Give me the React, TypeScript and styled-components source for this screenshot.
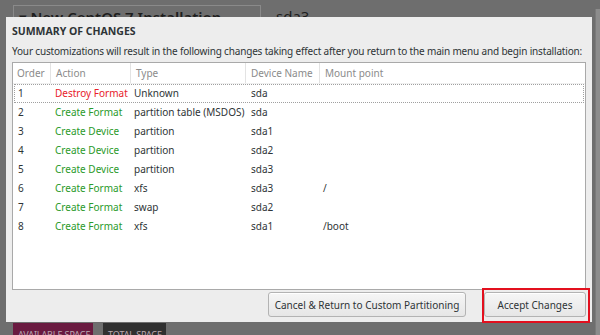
import React from "react";
import styled, { createGlobalStyle } from "styled-components";

const Global = createGlobalStyle`
  html, body { margin: 0; padding: 0; background: #6e6e6e; }
  body { width: 600px; height: 335px; overflow: hidden; font-family: "Noto Sans", "DejaVu Sans", sans-serif; }
`;

const Page = styled.div`
  position: relative;
  width: 600px;
  height: 335px;
  background: #6e6e6e;
  display: grid;
  grid-template-columns: 1fr 5px;
  overflow: hidden;
`;

const Main = styled.div`
  display: flex;
  flex-direction: column;
  justify-content: space-between;
  padding: 5px 0 0 13px;
`;

const TopRow = styled.div`
  display: flex;
  align-items: flex-start;
  gap: 15px;
`;

const InstallBox = styled.div`
  width: 248px;
  height: 40px;
  border: 1px solid #8a8a8a;
  border-bottom: none;
  box-sizing: border-box;
  padding: 1px 0 0 5px;
  font-size: 15px;
  font-weight: 600;
  color: #1e1e1e;
`;

const DeviceLabel = styled.div`
  font-size: 15px;
  color: #1e1e1e;
  padding-top: 1px;
`;

const BottomRow = styled.div`
  display: flex;
  gap: 10px;
`;

const SpaceTile = styled.div<{ $bg: string; $w: number }>`
  background: ${(p) => p.$bg};
  width: ${(p) => p.$w}px;
  box-sizing: border-box;
  color: #b9a9b0;
  font-size: 9px;
  letter-spacing: -0.1px;
  height: 12px;
  padding: 6px 0 0 5px;
  line-height: 12px;
  overflow: hidden;
  white-space: nowrap;
`;

const Scrollbar = styled.div`
  margin-top: 9px;
  background: #8c8c8c;
  border-left: 1px solid #7a7a7a;
`;

const Dialog = styled.div`
  position: absolute;
  left: 6px;
  top: 17px;
  width: 586px;
  height: 305px;
  box-sizing: border-box;
  background: #ededed;
  padding: 0 6px 5px 6px;
  display: flex;
  flex-direction: column;
  color: #2e3436;
`;

const Title = styled.div`
  font-size: 10.5px;
  font-weight: 700;
  color: #2e3436;
  height: 24px;
  line-height: 29px;
`;

const Subtitle = styled.div`
  font-size: 10px;
  letter-spacing: -0.17px;
  color: #2e3436;
  height: 21px;
  line-height: 20px;
  white-space: nowrap;
`;

const Table = styled.div`
  flex: 1;
  background: #ffffff;
  border: 1px solid #a9a9a9;
  display: flex;
  flex-direction: column;
`;

const cols = "37px 80px 115px 74px 1fr";

const HeaderRow = styled.div`
  display: grid;
  grid-template-columns: ${cols};
  height: 20px;
  border-bottom: 1px solid #f0f0f0;
`;

const HeaderCell = styled.div<{ $sep?: boolean }>`
  font-size: 10px;
  color: #8b8b8b;
  line-height: 20px;
  padding-left: ${(p) => (p.$sep ? 5 : 4)}px;
  border-left: ${(p) => (p.$sep ? "1px solid #e3e3e3" : "none")};
`;

const Row = styled.div<{ $focused?: boolean }>`
  display: grid;
  grid-template-columns: ${cols};
  height: 19px;
  margin: 0 1px;
  box-sizing: border-box;
  border: 1px dotted ${(p) => (p.$focused ? "#a0a0a0" : "transparent")};
`;

const Cell = styled.div<{ $color?: string; $pad?: number }>`
  font-size: 10px;
  line-height: 17px;
  color: ${(p) => p.$color || "#2e3436"};
  padding-left: ${(p) => p.$pad ?? 3}px;
  white-space: nowrap;
`;

const ButtonBar = styled.div`
  display: flex;
  justify-content: flex-end;
  gap: 18px;
  padding-top: 2px;
`;

const Button = styled.button<{ $w: number }>`
  width: ${(p) => p.$w}px;
  height: 25px;
  box-sizing: border-box;
  border: 1px solid #b3b3b3;
  border-radius: 3px;
  background: linear-gradient(#f6f6f6, #e6e6e6);
  font-family: "Noto Sans", "DejaVu Sans", sans-serif;
  font-size: 10px;
  color: #2e3436;
  padding: 0;
  box-shadow: inset 0 1px #fff;
`;

const Highlight = styled.div`
  position: relative;
  display: flex;
`;

const RedBox = styled.div`
  position: absolute;
  left: -2px;
  right: -4px;
  top: -4px;
  bottom: -6px;
  border: 2px solid #e3101e;
  pointer-events: none;
`;

type Change = { order: number; action: string; type: string; device: string; mount: string };

const changes: Change[] = [
  { order: 1, action: "Destroy Format", type: "Unknown", device: "sda", mount: "" },
  { order: 2, action: "Create Format", type: "partition table (MSDOS)", device: "sda", mount: "" },
  { order: 3, action: "Create Device", type: "partition", device: "sda1", mount: "" },
  { order: 4, action: "Create Device", type: "partition", device: "sda2", mount: "" },
  { order: 5, action: "Create Device", type: "partition", device: "sda3", mount: "" },
  { order: 6, action: "Create Format", type: "xfs", device: "sda3", mount: "/" },
  { order: 7, action: "Create Format", type: "swap", device: "sda2", mount: "" },
  { order: 8, action: "Create Format", type: "xfs", device: "sda1", mount: "/boot" },
];

export default function App() {
  return (
    <>
      <Global />
      <Page>
        <Main>
          <TopRow>
            <InstallBox>▾ New CentOS 7 Installation</InstallBox>
            <DeviceLabel>sda3</DeviceLabel>
          </TopRow>
          <BottomRow>
            <SpaceTile $bg="#6a1a40" $w={80}>AVAILABLE SPACE</SpaceTile>
            <SpaceTile $bg="#303030" $w={63}>TOTAL SPACE</SpaceTile>
          </BottomRow>
        </Main>
        <Scrollbar />
        <Dialog>
          <Title>SUMMARY OF CHANGES</Title>
          <Subtitle>
            Your customizations will result in the following changes taking effect after you return to the main menu and begin installation:
          </Subtitle>
          <Table>
            <HeaderRow>
              <HeaderCell>Order</HeaderCell>
              <HeaderCell $sep>Action</HeaderCell>
              <HeaderCell $sep>Type</HeaderCell>
              <HeaderCell $sep>Device Name</HeaderCell>
              <HeaderCell $sep>Mount point</HeaderCell>
            </HeaderRow>
            {changes.map((c, i) => (
              <Row key={c.order} $focused={i === 0}>
                <Cell $pad={3}>{c.order}</Cell>
                <Cell $pad={3} $color={c.action.startsWith("Destroy") ? "#e8202a" : "#2a9a2a"}>
                  {c.action}
                </Cell>
                <Cell $pad={2}>{c.type}</Cell>
                <Cell $pad={4}>{c.device}</Cell>
                <Cell $pad={2}>{c.mount}</Cell>
              </Row>
            ))}
          </Table>
          <ButtonBar>
            <Button $w={198}>Cancel &amp; Return to Custom Partitioning</Button>
            <Highlight>
              <Button $w={102}>Accept Changes</Button>
              <RedBox />
            </Highlight>
          </ButtonBar>
        </Dialog>
      </Page>
    </>
  );
}
